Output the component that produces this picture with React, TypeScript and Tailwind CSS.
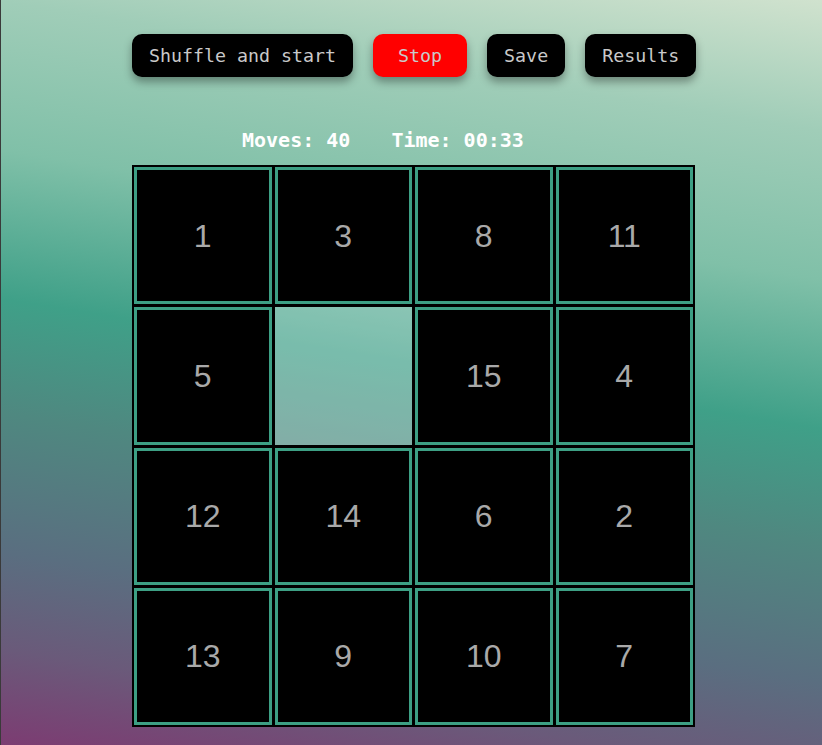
import React from "react";

const tiles: (number | null)[] = [1, 3, 8, 11, 5, null, 15, 4, 12, 14, 6, 2, 13, 9, 10, 7];

const mono = "font-['DejaVu_Sans_Mono',monospace]";

function TopButton(props: { children: React.ReactNode; danger?: boolean; className?: string }): React.JSX.Element {
  const base =
    `h-[43px] px-[17px] rounded-[10px] text-[18.3px] text-[#c9c9c9] shadow-[0_5px_8px_rgba(0,0,0,0.35)] ${mono}`;
  const color = props.danger ? "bg-[#ff0000]" : "bg-black";
  return (
    <button type="button" className={`${base} ${color} ${props.className ?? ""}`}>
      {props.children}
    </button>
  );
}

function Tile({value}: { value: number | null }): React.JSX.Element {
  // 空きマスは薄い白で少し明るく
  if (value === null) return <div className="bg-[rgba(255,255,255,0.3)] shadow-[0_0_0_1px_#000]"/>;
  return (
    <div
      className="flex items-center justify-center bg-black border-[3px] border-[#3d9f84] shadow-[0_0_0_2px_#000] text-[32px] text-[#a9a9a9] font-['Liberation_Sans',Arial,sans-serif]">
      {value}
    </div>
  );
}

export default function App(): React.JSX.Element {
  return (
    <div
      className="min-h-screen border-l border-[#3a3a3a] pl-[131px] pt-[34px] bg-[linear-gradient(189deg,#d0e2ce_0%,#a0cdb8_15%,#80c0a8_32%,#3fa088_49%,#4f8880_62%,#5a6e80_78%,#6a5a7a_89%,#7c3c72_100%)]">
      <div className="flex gap-[20px]">
        <TopButton>Shuffle and start</TopButton>
        <TopButton danger className="w-[94px]">Stop</TopButton>
        <TopButton>Save</TopButton>
        <TopButton>Results</TopButton>
      </div>

      <div className={`mt-[51px] ml-[110px] flex gap-[41px] h-[24px] items-center text-[20px] font-bold text-white ${mono}`}>
        <span>Moves: 40</span>
        <span>Time: 00:33</span>
      </div>

      <div className="mt-[13px] w-[563px] h-[562px] border-2 border-black grid grid-cols-4 grid-rows-4 gap-[3px]">
        {tiles.map((t, i) => (
          <Tile key={i} value={t}/>
        ))}
      </div>
    </div>
  );
}
